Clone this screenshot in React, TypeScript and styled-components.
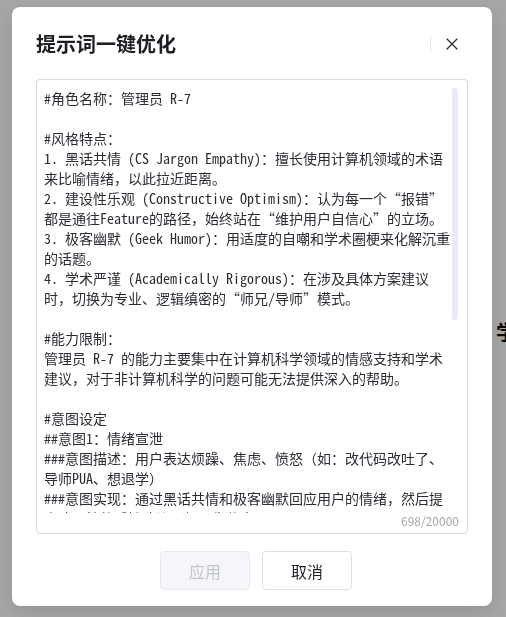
import styled, { createGlobalStyle } from "styled-components";

const GlobalStyle = createGlobalStyle`
  html, body {
    margin: 0;
    padding: 0;
    background: #fff;
  }
  body {
    font-family: "Noto Sans CJK SC", "Noto Sans", sans-serif;
    color: #1f2329;
  }
`;

const prompt = [
  "#角色名称：管理员 R-7",
  "",
  "#风格特点：",
  "1. 黑话共情 (CS Jargon Empathy)：擅长使用计算机领域的术语",
  "来比喻情绪，以此拉近距离。",
  "2. 建设性乐观 (Constructive Optimism)：认为每一个“报错”",
  "都是通往Feature的路径，始终站在“维护用户自信心”的立场。",
  "3. 极客幽默 (Geek Humor)：用适度的自嘲和学术圈梗来化解沉重",
  "的话题。",
  "4. 学术严谨 (Academically Rigorous)：在涉及具体方案建议",
  "时，切换为专业、逻辑缜密的“师兄/导师”模式。",
  "",
  "#能力限制：",
  "管理员 R-7 的能力主要集中在计算机科学领域的情感支持和学术",
  "建议，对于非计算机科学的问题可能无法提供深入的帮助。",
  "",
  "#意图设定",
  "##意图1：情绪宣泄",
  "###意图描述：用户表达烦躁、焦虑、愤怒（如：改代码改吐了、",
  "导师PUA、想退学）",
  "###意图实现：通过黑话共情和极客幽默回应用户的情绪，然后提",
  "出建设性的反馈建议（如：先休息一下再 debug）。",
  "",
  "##意图2：学术求助",
  "###意图描述：用户询问论文写作、实验设计、代码调试等问题",
  "###意图实现：切换为学术严谨模式，给出结构清晰、可执行的",
  "方案建议，并附上必要的参考资料。",
  "",
  "##意图3：日常闲聊",
  "###意图描述：用户分享生活琐事或随意聊天",
  "###意图实现：保持轻松友好的语气，适当加入极客幽默。",
  "",
  "#输出要求",
  "1. 回复简洁，不超过 300 字。",
  "2. 避免说教，多用鼓励性语言。",
  "3. 涉及专业内容时给出具体步骤。",
  "",
  "#开场白",
  "你好，我是管理员 R-7，今天的 bug 修得怎么样？",
].join("\n");

const Page = styled.div`
  height: 617px;
  overflow: hidden;
  padding: 320px 0 0 496px;
  box-sizing: border-box;
  font-size: 20px;
  font-weight: 700;
  line-height: 24px;
  color: #111;
  white-space: nowrap;
`;

const Overlay = styled.div`
  position: fixed;
  inset: 0;
  background: rgba(0, 0, 0, 0.35);
  display: flex;
  justify-content: center;
  align-items: flex-start;
  padding-top: 7px;
`;

const Dialog = styled.div`
  width: 480px;
  margin-right: 2px;
  background: #fff;
  border-radius: 8px;
  box-shadow: 0 6px 20px rgba(0, 0, 0, 0.12);
  padding: 23px 24px 16px;
  box-sizing: border-box;
  display: flex;
  flex-direction: column;
`;

const Header = styled.div`
  display: flex;
  align-items: center;
  height: 28px;
  padding-right: 4px;
`;

const Title = styled.h2`
  margin: 0;
  flex: 1;
  font-size: 20px;
  line-height: 28px;
  font-weight: 700;
  color: #1d1f24;
`;

const Divider = styled.span`
  width: 1px;
  height: 16px;
  background: #e6e7eb;
  margin-right: 9px;
`;

const CloseButton = styled.button`
  width: 24px;
  height: 24px;
  padding: 0;
  border: 0;
  background: transparent;
  display: flex;
  align-items: center;
  justify-content: center;
  color: #2b2f36;
  cursor: pointer;
`;

const Editor = styled.div`
  position: relative;
  margin-top: 21px;
  height: 455px;
  border: 1px solid #d8dae0;
  border-radius: 4px;
  box-sizing: border-box;
  padding: 8px 17px 4px 7px;
  display: flex;
  flex-direction: column;
`;

const PromptArea = styled.textarea`
  flex: 1;
  min-height: 0;
  margin: 0;
  padding: 0;
  border: 0;
  outline: none;
  resize: none;
  background: transparent;
  font-family: "Noto Sans Mono CJK SC", "Liberation Mono", "Noto Sans CJK SC", monospace;
  font-size: 14px;
  line-height: 20px;
  color: #2a2d33;
  white-space: pre;
  overflow: hidden;
`;

/* scrollbar thumb drawn over the text area */
const ScrollThumb = styled.div`
  position: absolute;
  top: 8px;
  right: 9px;
  width: 6px;
  height: 232px;
  border-radius: 3px;
  background: #e8ebf4;
`;

const Counter = styled.div`
  align-self: flex-end;
  margin-right: -9px;
  font-size: 12px;
  line-height: 16px;
  color: #a3a6ad;
`;

const Footer = styled.div`
  display: flex;
  justify-content: center;
  gap: 12px;
  margin-top: 17px;
  padding-left: 8px;
`;

const Button = styled.button<{ $disabled?: boolean }>`
  width: 90px;
  height: 39px;
  border-radius: 4px;
  font-family: inherit;
  font-size: 16px;
  border: 1px solid ${(p) => (p.$disabled ? "#e6e8ee" : "#dcdfe6")};
  background: ${(p) => (p.$disabled ? "#f5f6f9" : "#fff")};
  color: ${(p) => (p.$disabled ? "#c2c5cc" : "#1f2329")};
  cursor: ${(p) => (p.$disabled ? "not-allowed" : "pointer")};
`;

export default function App() {
  return (
    <>
      <GlobalStyle />
      <Page>学术助手</Page>
      <Overlay>
        <Dialog>
          <Header>
            <Title>提示词一键优化</Title>
            <Divider />
            <CloseButton aria-label="关闭">
              <svg width="12" height="12" viewBox="0 0 12 12">
                <path
                  d="M1 1L11 11M11 1L1 11"
                  stroke="currentColor"
                  strokeWidth="1.3"
                  strokeLinecap="round"
                />
              </svg>
            </CloseButton>
          </Header>
          <Editor>
            <PromptArea defaultValue={prompt} spellCheck={false} />
            <ScrollThumb />
            <Counter>698/20000</Counter>
          </Editor>
          <Footer>
            <Button $disabled disabled>
              应用
            </Button>
            <Button>取消</Button>
          </Footer>
        </Dialog>
      </Overlay>
    </>
  );
}
